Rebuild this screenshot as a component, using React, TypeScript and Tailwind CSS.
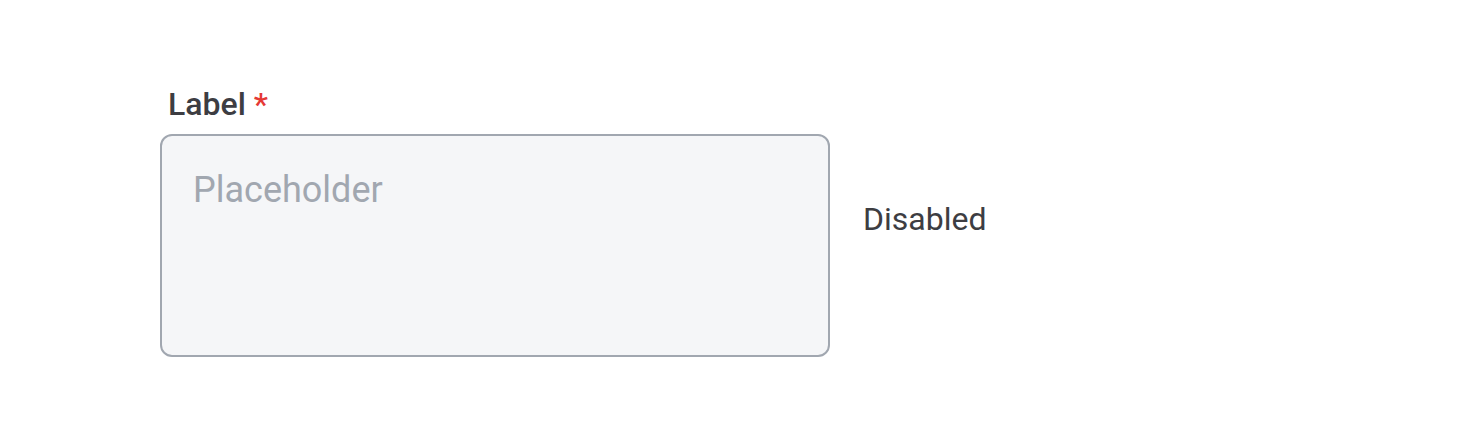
import React from "react";

export default function App() {
  return (
    <div className="w-[1480px] h-[440px] bg-white" style={{ fontFamily: "Roboto, 'Noto Sans', sans-serif" }}>
      <div className="flex items-center gap-[33px] pl-[160px] pt-[84px]">
        <div className="flex flex-col">
          <div className="pl-[8px] text-[32px] leading-[40px] font-medium text-[#3d3d42] mb-[10px]">
            Label <span className="text-[#e53935]">*</span>
          </div>
          <div className="w-[670px] h-[223px] rounded-[12px] border-2 border-[#a1a7b0] bg-[#f5f6f8] px-[31px] pt-[32px]">
            <div className="text-[36px] leading-[44px] text-[#a1a7b0]">Placeholder</div>
          </div>
        </div>
        <div className="text-[32px] leading-[40px] text-[#3d3d42] mb-[4px]">Disabled</div>
      </div>
    </div>
  );
}
